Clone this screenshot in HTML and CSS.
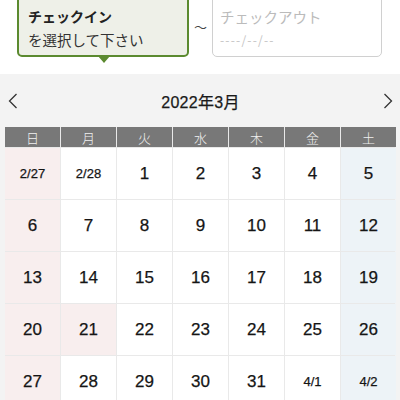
FILE: index.html
```html
<!DOCTYPE html>
<html lang="ja">
<head>
<meta charset="utf-8">
<link rel="stylesheet" href="styles.css">
</head>
<body>
<div class="top">
  <div class="box checkin">
    <div class="title">チェックイン</div>
    <div class="sub">を選択して下さい</div>
  </div>
  <div class="tilde">～</div>
  <div class="box checkout">
    <div class="title">チェックアウト</div>
    <div class="sub date">----/--/--</div>
  </div>
</div>
<div class="cal">
  <div class="month">
    <svg class="arrow" width="10" height="16" viewBox="0 0 10 16"><path d="M8.5 1 L1.5 8 L8.5 15" fill="none" stroke="#333" stroke-width="1.3"/></svg>
    <div class="mtitle">2022年3月</div>
    <svg class="arrow" width="10" height="16" viewBox="0 0 10 16"><path d="M1.5 1 L8.5 8 L1.5 15" fill="none" stroke="#333" stroke-width="1.3"/></svg>
  </div>
  <div class="grid">
    <div class="wd">日</div><div class="wd">月</div><div class="wd">火</div><div class="wd">水</div><div class="wd">木</div><div class="wd">金</div><div class="wd">土</div>
    <div class="c sun sm">2/27</div><div class="c sm">2/28</div><div class="c">1</div><div class="c">2</div><div class="c">3</div><div class="c">4</div><div class="c sat">5</div>
    <div class="c sun">6</div><div class="c">7</div><div class="c">8</div><div class="c">9</div><div class="c">10</div><div class="c">11</div><div class="c sat">12</div>
    <div class="c sun">13</div><div class="c">14</div><div class="c">15</div><div class="c">16</div><div class="c">17</div><div class="c">18</div><div class="c sat">19</div>
    <div class="c sun">20</div><div class="c sun">21</div><div class="c">22</div><div class="c">23</div><div class="c">24</div><div class="c">25</div><div class="c sat">26</div>
    <div class="c sun">27</div><div class="c">28</div><div class="c">29</div><div class="c">30</div><div class="c">31</div><div class="c sm">4/1</div><div class="c sat sm">4/2</div>
  </div>
</div>
</body>
</html>
```
FILE: styles.css
```css
html, body {
  margin: 0;
  padding: 0;
  background: #fff;
  font-family: "Noto Sans CJK JP", "Noto Sans", sans-serif;
  color: #222;
  overflow: hidden;
}
.top {
  display: flex;
  align-items: flex-start;
  margin-top: -5px;
  padding-left: 17px;
  height: 62px;
}
.box {
  box-sizing: border-box;
  height: 62px;
  border-radius: 5px;
  padding: 8px 0 0 9px;
  position: relative;
}
.checkin {
  width: 172px;
  border: 2px solid #5b8a2f;
  background: #eef0e8;
}
.checkin::after {
  content: "";
  position: absolute;
  left: 79px;
  bottom: -8px;
  border-left: 6px solid transparent;
  border-right: 6px solid transparent;
  border-top: 7px solid #5b8a2f;
}
.checkout {
  width: 170px;
  border: 1px solid #d0d0d0;
  background: #fff;
  padding-left: 7px;
  padding-top: 9px;
}
.title {
  font-size: 14px;
  line-height: 23px;
  font-weight: 700;
}
.sub {
  font-size: 14.5px;
  line-height: 23px;
  color: #333;
}
.checkout .title {
  font-weight: 400;
  font-size: 14.5px;
  color: #bbb;
}
.checkout .date {
  color: #c4c4c4;
  font-size: 12px;
  letter-spacing: 1.2px;
}
.tilde {
  width: 23px;
  text-align: center;
  font-size: 13px;
  line-height: 14px;
  margin-top: 25px;
  color: #444;
}
.cal {
  margin-top: 17px;
  background: #f3f3f3;
  padding: 0 5px;
}
.month {
  display: flex;
  justify-content: space-between;
  align-items: center;
  height: 53px;
  padding: 0 2px 0 3px;
}
.mtitle {
  font-family: "Liberation Sans", "Noto Sans CJK JP", sans-serif;
  font-size: 16px;
  font-weight: 400;
  color: #1a1a1a;
  letter-spacing: 0.3px;
  -webkit-text-stroke: 0.25px #1a1a1a;
}
.arrow {
  display: block;
}
.grid {
  display: grid;
  grid-template-columns: repeat(7, 55px);
  grid-template-rows: 20px repeat(5, 51px);
  gap: 1px;
  background: #e9e9e9;
}
.wd {
  background: #787878;
  color: #f0f0f0;
  font-size: 13px;
  font-weight: 300;
  display: flex;
  align-items: center;
  justify-content: center;
}
.c {
  background: #fff;
  display: flex;
  align-items: center;
  justify-content: center;
  font-family: "Liberation Sans", "Noto Sans CJK JP", sans-serif;
  font-size: 17px;
  color: #151515;
  -webkit-text-stroke: 0.25px #151515;
}
.c.sm {
  font-size: 13px;
}
.sun {
  background: #f8eeee;
}
.sat {
  background: #edf3f7;
}
```
